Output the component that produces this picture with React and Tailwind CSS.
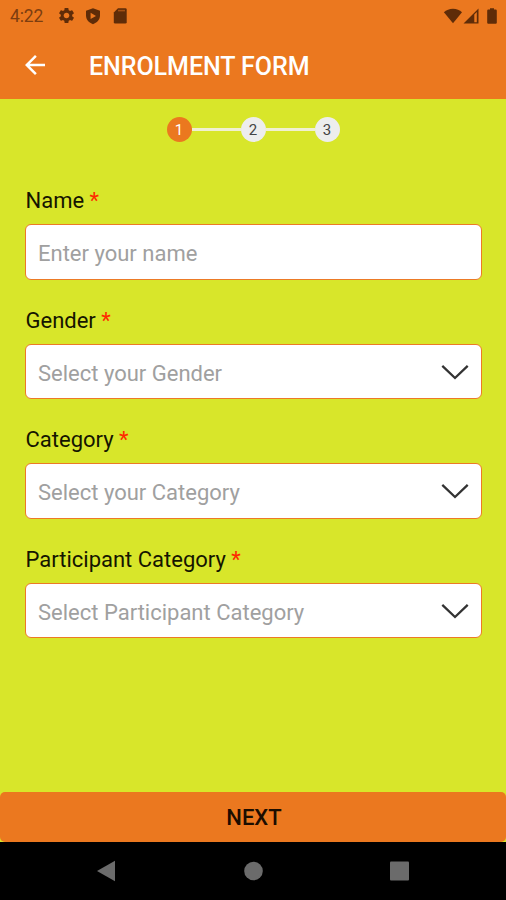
import React, { useState } from 'react';
import { MdArrowBack, MdSettings } from 'react-icons/md';

const STEPS = [1, 2, 3];

const FIELDS = [
  { id: 'name', label: 'Name', placeholder: 'Enter your name', select: false },
  { id: 'gender', label: 'Gender', placeholder: 'Select your Gender', select: true },
  { id: 'category', label: 'Category', placeholder: 'Select your Category', select: true },
  { id: 'participant', label: 'Participant Category', placeholder: 'Select Participant Category', select: true },
];

function StatusBar() {
  return (
    <div className="flex h-[33px] items-center pl-[10px] pr-[8px] pb-[2px] text-[#5f2c08]">
      <span className="w-[47px] pt-[3px] text-[17.5px] leading-none tracking-[-0.1px] text-[#7c3d10]">4:22</span>
      <MdSettings className="h-[19px] w-[19px] shrink-0" />
      <svg className="ml-[8px] h-[18px] w-[18px]" viewBox="0 0 18 18">
        <path fill="currentColor" fillRule="evenodd" d="M9 1.2 16 3.7V8.6C16 12.7 12.9 16 9 17.2 5.1 16 2 12.7 2 8.6V3.7ZM6.6 5.8V12L12 8.9Z" />
      </svg>
      <svg className="ml-[9px] h-[18px] w-[18px]" viewBox="0 0 18 18">
        <path fill="currentColor" d="M7 1.2H14.3Q15.7 1.2 15.7 2.6V15.2Q15.7 16.6 14.3 16.6H4.2Q2.8 16.6 2.8 15.2V5.6Z" />
        <path stroke="#a45014" strokeWidth="1.6" d="M7 3.6H14" />
      </svg>
      <div className="ml-auto flex items-center">
        <svg className="h-[18px] w-[20px]" viewBox="0 0 20 18">
          <path fill="currentColor" d="M11 16.3 1.9 5.2C4.3 3 7.4 1.8 11 1.8S17.7 3 20 5.2Z" />
        </svg>
        <svg className="ml-[1px] h-[18px] w-[17px]" viewBox="0 0 17 18">
          <path fill="currentColor" fillRule="evenodd" d="M.5 16.5 15.5 1.5V16.5ZM11.3 7.5V15.3H13.8V5Z" />
        </svg>
        <svg className="ml-[6px] h-[18px] w-[12px]" viewBox="0 0 12 18">
          <path fill="currentColor" d="M4 1.3H8V2.6H9.7Q10.8 2.6 10.8 3.7V15.7Q10.8 16.8 9.7 16.8H2.3Q1.2 16.8 1.2 15.7V3.7Q1.2 2.6 2.3 2.6H4Z" />
        </svg>
      </div>
    </div>
  );
}

function Header() {
  return (
    <header className="flex h-[65px] items-center pb-[1px] pl-[20px] text-white">
      <button type="button" aria-label="Back" className="mr-[39px]">
        <MdArrowBack className="h-[30px] w-[30px]" />
      </button>
      <h1 className="pt-[2px] text-[25px] font-medium leading-none tracking-[-0.05px]">ENROLMENT FORM</h1>
    </header>
  );
}

function Stepper({ current }) {
  return (
    <div className="flex items-center justify-center pt-[18px]">
      {STEPS.map((step) => (
        <React.Fragment key={step}>
          {step > 1 && <div className="h-[3px] w-[49px] bg-[#f0f0d0]" />}
          <div
            className={`flex h-[25px] w-[25px] items-center justify-center rounded-full pt-[2px] text-[15px] leading-none ${
              step === current ? 'bg-[#eb781f] text-white' : 'bg-[#ededed] text-[#444444]'
            }`}
          >
            {step}
          </div>
        </React.Fragment>
      ))}
    </div>
  );
}

function Chevron() {
  return (
    <svg className="h-[16px] w-[28px] shrink-0" viewBox="0 0 28 16" fill="none">
      <path d="M1.3 1.8 14 14 26.7 1.8" stroke="#333333" strokeWidth="2.3" />
    </svg>
  );
}

function Field({ id, label, placeholder, select, value, onChange }) {
  return (
    <div className="h-[119.6px]">
      <label htmlFor={id} className="block h-[36px] pl-[0.5px] text-[22px] leading-[26px] text-[#151500]">
        {label} <span className="text-[#ff2a00]">*</span>
      </label>
      <div className="flex h-[55.5px] items-center rounded-[6px] border-[1.5px] border-[#ec7a26] bg-white px-[12px]">
        <input
          id={id}
          readOnly={select}
          value={value}
          onChange={onChange}
          placeholder={placeholder}
          className="h-full min-w-0 flex-1 bg-transparent pt-[3px] text-[22px] outline-none placeholder:text-[#a0a0a0]"
        />
        {select && <Chevron />}
      </div>
    </div>
  );
}

function NavigationBar() {
  return (
    <nav className="flex h-[58px] items-center justify-between bg-black px-[96px] text-[#6b6b6b]">
      <svg className="h-[22px] w-[20px]" viewBox="0 0 20 22" fill="currentColor">
        <path d="M1 11 19 .7V21.3Z" />
      </svg>
      <svg className="h-[20px] w-[20px]" viewBox="0 0 20 20" fill="currentColor">
        <circle cx="10.5" cy="10" r="9.3" />
      </svg>
      <svg className="h-[20px] w-[20px]" viewBox="0 0 20 20" fill="currentColor">
        <rect x="0" y=".5" width="19" height="19" rx="1" />
      </svg>
    </nav>
  );
}

export default function App() {
  const [name, setName] = useState('');

  return (
    <div className="flex h-[900px] w-[506px] flex-col overflow-hidden bg-[#d8e62a] font-['Roboto',sans-serif]">
      <div className="h-[98.5px] shrink-0 bg-[#eb781f]">
        <StatusBar />
        <Header />
      </div>
      <main className="flex-1">
        <Stepper current={1} />
        <form className="pl-[25px] pr-[24px] pt-[46.7px]">
          {FIELDS.map((field) => (
            <Field
              key={field.id}
              {...field}
              value={field.select ? '' : name}
              onChange={(e) => setName(e.target.value)}
            />
          ))}
        </form>
      </main>
      <button
        type="button"
        className="h-[50px] shrink-0 rounded-[5px] bg-[#eb781f] pl-[2px] pt-[2px] text-[22px] font-medium leading-none text-[#1c0d00]"
      >
        NEXT
      </button>
      <NavigationBar />
    </div>
  );
}
